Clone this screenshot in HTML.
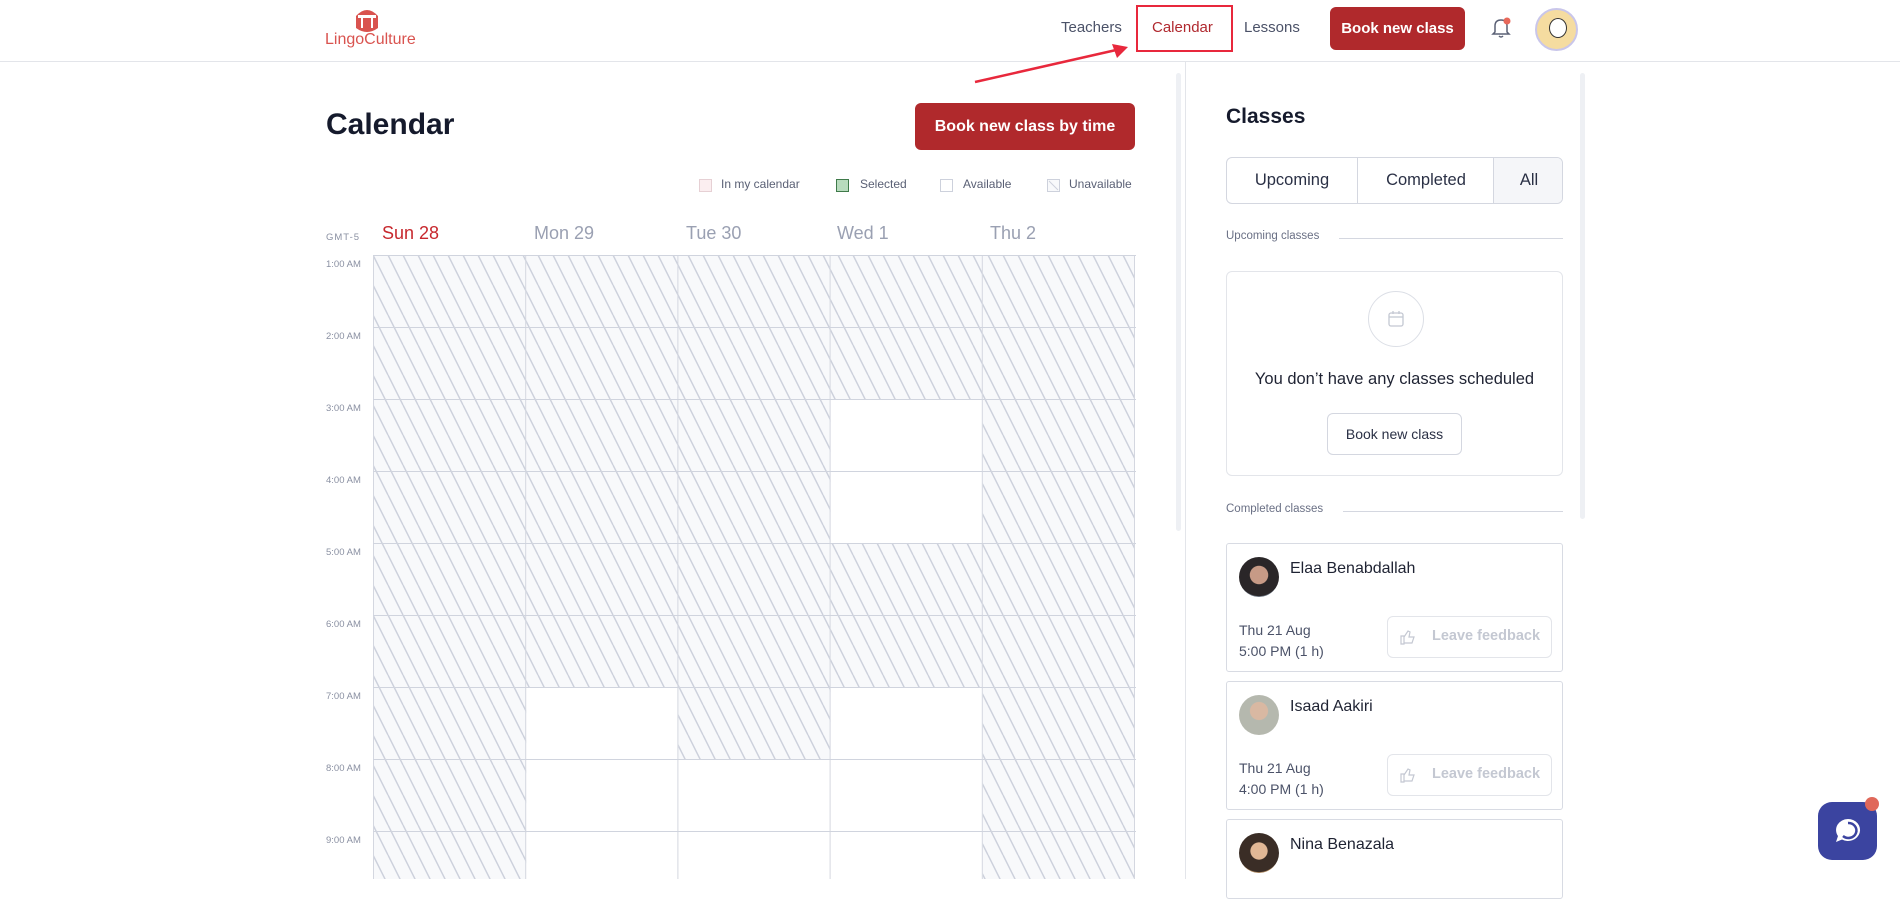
<!DOCTYPE html>
<html><head><meta charset="utf-8"><style>
*{margin:0;padding:0;box-sizing:border-box}
body{width:1900px;height:879px;overflow:hidden;background:#fff;font-family:"Liberation Sans","Noto Sans CJK JP",sans-serif;color:#1f2333;position:relative}
.a{position:absolute}
.nav{font-size:15px;color:#4b5268;top:19px}
.tl{font-size:9.5px;color:#8a90a2;left:326px}
.day{font-size:18px;color:#9aa0b2;top:223px}
.card{position:absolute;left:1226px;width:337px;border:1px solid #d8dbe3;border-radius:3px;background:#fff}
.fb{position:absolute;left:160px;width:165px;height:42px;border:1px solid #e3e5ea;border-radius:6px;color:#c4c8d2;font-size:14.5px;font-weight:bold;padding:11px 0 0 44px}
</style></head><body>
<div class="a" style="left:0;top:61px;width:1900px;height:1px;background:#e3e5ea"></div>
<svg class="a" style="left:352px;top:6px" width="30" height="28" viewBox="0 0 30 28"><path d="M4 10 Q15 -2 26 10 L26 22 Q15 30 4 22Z" fill="#d9534f"/><rect x="6" y="9" width="18" height="3" fill="#fff"/><rect x="9" y="12" width="2" height="10" fill="#fff"/><rect x="19" y="12" width="2" height="10" fill="#fff"/></svg>
<div class="a" style="left:325px;top:31px;font-size:16px;color:#d9534f">LingoCulture</div>
<div class="a nav" style="left:1061px">Teachers</div>
<div class="a nav" style="left:1152px;color:#b0282e">Calendar</div>
<div class="a" style="left:1136px;top:5px;width:97px;height:47px;border:2px solid #e8283c"></div>
<div class="a nav" style="left:1244px">Lessons</div>
<div class="a" style="left:1330px;top:7px;width:135px;height:43px;background:#b0292c;border-radius:6px;color:#fff;font-weight:bold;font-size:15px;text-align:center;line-height:43px">Book new class</div>
<svg class="a" style="left:1489px;top:16px" width="24" height="24" viewBox="0 0 24 24"><path d="M6 16 L6 10 Q6 4 12 4 Q18 4 18 10 L18 16 L20 18 L4 18Z M10 20 Q12 22 14 20" fill="none" stroke="#5a6075" stroke-width="1.5"/><circle cx="18" cy="5" r="3.5" fill="#e8685a"/></svg>
<div class="a" style="left:1535px;top:8px;width:43px;height:43px;border-radius:50%;background:#f5dca0;border:2px solid #c9c6ea;overflow:hidden"><div style="margin:8px 0 0 12px;width:18px;height:20px;border-radius:50%;background:#fff;border:1px solid #333"></div></div>
<svg class="a" style="left:970px;top:40px" width="170" height="48"><line x1="5" y1="42" x2="155" y2="8" stroke="#e8283c" stroke-width="2.5"/><path d="M158 7 L142 4 L147 18Z" fill="#e8283c"/></svg>
<div class="a" style="left:326px;top:108px;font-size:30px;font-weight:bold;color:#151a2c">Calendar</div>
<div class="a" style="left:915px;top:103px;width:220px;height:47px;background:#b0292c;border-radius:6px;color:#fff;font-weight:bold;font-size:16px;text-align:center;line-height:47px">Book new class by time</div>
<div class="a" style="top:179px;left:699px;width:13px;height:13px;border:1px solid #e6d0d4;background:#fbeef0"></div>
<div class="a" style="top:177px;left:721px;font-size:12px;color:#5a6075">In my calendar</div>
<div class="a" style="top:179px;left:836px;width:13px;height:13px;border:1px solid #3f7a4a;background:#b8dbbd"></div>
<div class="a" style="top:177px;left:860px;font-size:12px;color:#5a6075">Selected</div>
<div class="a" style="top:179px;left:940px;width:13px;height:13px;border:1px solid #cdd1dc"></div>
<div class="a" style="top:177px;left:963px;font-size:12px;color:#5a6075">Available</div>
<svg class="a" style="top:179px;left:1047px" width="13" height="13"><rect x="0.5" y="0.5" width="12" height="12" fill="#f8f9fb" stroke="#cdd1dc"/><line x1="2" y1="2" x2="11" y2="11" stroke="#cdd1dc"/></svg>
<div class="a" style="top:177px;left:1069px;font-size:12px;color:#5a6075">Unavailable</div>
<div class="a" style="left:326px;top:232px;font-size:9.5px;color:#8a90a2;letter-spacing:1px">GMT-5</div>
<div class="a day" style="left:382px;color:#c7282e">Sun 28</div>
<div class="a day" style="left:534px">Mon 29</div>
<div class="a day" style="left:686px">Tue 30</div>
<div class="a day" style="left:837px">Wed 1</div>
<div class="a day" style="left:990px">Thu 2</div>
<svg id="g" class="a" style="left:373px;top:255px" width="763" height="624"></svg>
<div class="a tl" style="top:259px">1:00 AM</div>
<div class="a tl" style="top:331px">2:00 AM</div>
<div class="a tl" style="top:403px">3:00 AM</div>
<div class="a tl" style="top:475px">4:00 AM</div>
<div class="a tl" style="top:547px">5:00 AM</div>
<div class="a tl" style="top:619px">6:00 AM</div>
<div class="a tl" style="top:691px">7:00 AM</div>
<div class="a tl" style="top:763px">8:00 AM</div>
<div class="a tl" style="top:835px">9:00 AM</div>
<script>
var avail={3:[2,3,6,7,8],1:[6,7,8],2:[7,8]};
var h='<defs><pattern id="p" patternUnits="userSpaceOnUse" width="15" height="30"><rect width="15" height="30" fill="#f8f9fb"/><path d="M0 0L15 30M-15 0L0 30M15 0L30 30" stroke="#cdd1dc" stroke-width="1.5"/></pattern></defs>';
for(var c=0;c<5;c++)for(var r=0;r<9;r++){var av=(avail[c]||[]).indexOf(r)>=0;
if(!av)h+='<rect x="'+(1+c*152.2)+'" y="'+(1+r*72)+'" width="152.2" height="72" fill="url(#p)"/>';}
for(var c=0;c<=5;c++)h+='<line x1="'+(0.5+c*152.2)+'" y1="0" x2="'+(0.5+c*152.2)+'" y2="624" stroke="#d4d7e0"/>';
for(var r=0;r<=9;r++)h+='<line x1="0" y1="'+(0.5+r*72)+'" x2="763" y2="'+(0.5+r*72)+'" stroke="#d0d4de"/>';
document.getElementById('g').innerHTML=h;
</script>
<div class="a" style="left:1176px;top:73px;width:5px;height:458px;background:#eef0f4;border-radius:3px"></div>
<div class="a" style="left:1185px;top:62px;width:1px;height:817px;background:#e3e5ea"></div>
<div class="a" style="left:1226px;top:105px;font-size:21px;font-weight:bold;color:#151a2c">Classes</div>
<div class="a" style="left:1226px;top:157px;width:337px;height:47px;border:1px solid #d4d7e0;border-radius:6px;overflow:hidden;font-size:16.5px;color:#2a3045">
<div class="a" style="left:0;top:0;width:130px;height:45px;text-align:center;line-height:45px">Upcoming</div>
<div class="a" style="left:130px;top:0;width:137px;height:45px;border-left:1px solid #d4d7e0;text-align:center;line-height:45px">Completed</div>
<div class="a" style="left:266px;top:0;width:71px;height:45px;border-left:1px solid #d4d7e0;background:#f5f6f9;text-align:center;line-height:45px">All</div></div>
<div class="a" style="left:1226px;top:230px;font-size:11.5px;color:#6a7085">Upcoming classes</div>
<div class="a" style="left:1339px;top:238px;width:224px;height:1px;background:#d4d7e0"></div>
<div class="card" style="top:271px;height:205px;border-color:#e3e5ea;border-radius:6px">
<div class="a" style="left:141px;top:19px;width:56px;height:56px;border-radius:50%;border:1px solid #dcdfe6"></div>
<svg class="a" style="left:160px;top:38px" width="18" height="18" viewBox="0 0 18 18"><rect x="2" y="3" width="14" height="13" rx="2" fill="none" stroke="#c4c8d2" stroke-width="1.3"/><line x1="2" y1="7" x2="16" y2="7" stroke="#c4c8d2" stroke-width="1.3"/><line x1="6" y1="1" x2="6" y2="4" stroke="#c4c8d2" stroke-width="1.3"/><line x1="12" y1="1" x2="12" y2="4" stroke="#c4c8d2" stroke-width="1.3"/></svg>
<div class="a" style="left:0;top:98px;width:335px;text-align:center;font-size:16.5px;color:#1f2333">You don’t have any classes scheduled</div>
<div class="a" style="left:100px;top:141px;width:135px;height:42px;border:1px solid #d4d7e0;border-radius:6px;text-align:center;line-height:40px;font-size:14px;color:#2a3045">Book new class</div></div>
<div class="a" style="left:1226px;top:503px;font-size:11.5px;color:#6a7085">Completed classes</div>
<div class="a" style="left:1343px;top:511px;width:220px;height:1px;background:#d4d7e0"></div>
<div class="card" style="top:543px;height:129px">
<div class="a" style="left:12px;top:13px;width:40px;height:40px;border-radius:50%;background:radial-gradient(circle at 50% 45%,#c79a86 0 30%,#2a2628 32% 70%,#6d7785 72%)"></div>
<div class="a" style="left:63px;top:16px;font-size:16px">Elaa Benabdallah</div>
<div class="a" style="left:12px;top:76px;font-size:14px;color:#4b5268;line-height:21px">Thu 21 Aug<br>5:00 PM (1 h)</div>
<div class="fb" style="top:72px">Leave feedback</div></div>
<div class="card" style="top:681px;height:129px">
<div class="a" style="left:12px;top:13px;width:40px;height:40px;border-radius:50%;background:radial-gradient(circle at 50% 40%,#d9b8a2 0 28%,#b5b8ae 30% 100%)"></div>
<div class="a" style="left:63px;top:16px;font-size:16px">Isaad Aakiri</div>
<div class="a" style="left:12px;top:76px;font-size:14px;color:#4b5268;line-height:21px">Thu 21 Aug<br>4:00 PM (1 h)</div>
<div class="fb" style="top:72px">Leave feedback</div></div>
<div class="card" style="top:819px;height:80px">
<div class="a" style="left:12px;top:13px;width:40px;height:40px;border-radius:50%;background:radial-gradient(circle at 50% 45%,#e2b896 0 28%,#3a2d26 30% 70%,#b08a60 72%)"></div>
<div class="a" style="left:63px;top:16px;font-size:16px">Nina Benazala</div></div>
<svg class="a" style="left:1400px;top:629px" width="16" height="16" viewBox="0 0 16 16"><path d="M1 7h3v8H1z M4 14h8l2-6h-5l1-5-2-1-4 6" fill="none" stroke="#c4c8d2" stroke-width="1.2"/></svg>
<svg class="a" style="left:1400px;top:767px" width="16" height="16" viewBox="0 0 16 16"><path d="M1 7h3v8H1z M4 14h8l2-6h-5l1-5-2-1-4 6" fill="none" stroke="#c4c8d2" stroke-width="1.2"/></svg>
<div class="a" style="left:1580px;top:73px;width:5px;height:446px;background:#eef0f4;border-radius:3px"></div>
<div class="a" style="left:1818px;top:802px;width:59px;height:58px;background:#3b44a0;border-radius:14px"></div>
<svg class="a" style="left:1830px;top:813px" width="36" height="36" viewBox="0 0 36 36"><path d="M18 6a12 11 0 1 1-6 20.5L6 29l2-6A12 11 0 0 1 18 6z" fill="#fff"/><path d="M18 10a8 7.5 0 1 1 -5 13" fill="none" stroke="#3b44a0" stroke-width="2.5"/></svg>
<div class="a" style="left:1865px;top:797px;width:14px;height:14px;border-radius:50%;background:#e0685a"></div>
</body></html>
